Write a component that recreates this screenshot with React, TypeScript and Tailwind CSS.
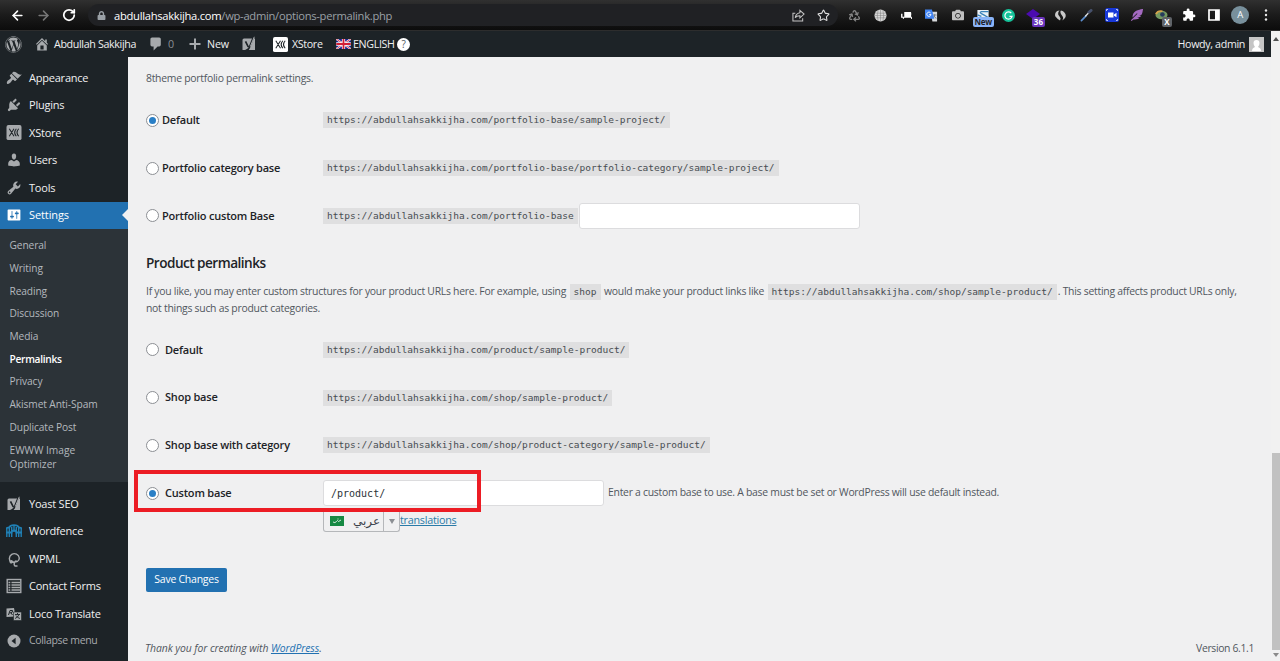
import type { ReactNode } from "react";
import { ArrowLeft, ArrowRight, Recycle, RotateCw, Star } from "lucide-react";
import { FaCamera, FaFeatherAlt, FaLock, FaWordpress } from "react-icons/fa";
import { MdExtension } from "react-icons/md";
import clsx from "clsx";

// 20x20 admin icon shapes
const paths = {
  home: "M16 8.5l1.53 1.53-1.06 1.06L10 4.6l-6.47 6.49-1.06-1.06L10 2.5l4 4v-2h2v4zm-6-2.46l6 5.99V18H4v-5.97zM12 17v-5H8v5h4z",
  comments: "M5 2h9q.82 0 1.41.59T16 4v7q0 .82-.59 1.41T14 13h-2l-5 5v-5H5q-.82 0-1.41-.59T3 11V4q0-.82.59-1.41T5 2z",
  appearance:
    "M14.48 11.06L7.41 3.99l1.5-1.5c.5-.56 2.3-.47 3.51.32 1.21.8 1.43 1.28 2.91 2.1 1.18.64 2.45 1.26 4.45.85zm-.71.71L6.7 4.7 4.93 6.47c-.39.39-.39 1.02 0 1.41l1.06 1.06c.39.39.39 1.03 0 1.42-.6.6-1.43 1.11-2.21 1.69-.35.26-.7.53-1.01.84C1.43 14.23.4 16.08 1.4 17.07c.99 1 2.84-.03 4.18-1.36.31-.31.58-.66.85-1.02.57-.78 1.08-1.61 1.69-2.21.39-.39 1.02-.39 1.41 0l1.06 1.06c.39.39 1.02.39 1.41 0z",
  plugins:
    "M13.11 4.36L9.87 7.6 8 5.73l3.24-3.24c.35-.34 1.05-.2 1.56.32.52.51.66 1.21.31 1.55zm-8 1.77l.91-1.12 9.01 9.01-1.19.84c-.71.71-2.63 1.16-3.82 1.16H6.14L4.9 17.26c-.59.59-1.54.59-2.12 0-.59-.58-.59-1.53 0-2.12l1.24-1.24v-3.88c0-1.13.4-3.19 1.09-3.89zm7.26 3.97l3.24-3.24c.34-.35 1.04-.21 1.55.31.52.51.66 1.21.31 1.55l-3.24 3.25z",
  users:
    "M10 9.25c-2.27 0-2.73-3.44-2.73-3.44C7 4.02 7.82 2 9.97 2c2.16 0 2.98 2.02 2.71 3.81 0 0-.41 3.44-2.68 3.44zm0 2.57L12.72 10c2.39 0 4.52 2.33 4.52 4.53v2.49s-3.65 1.13-7.24 1.13c-3.65 0-7.24-1.13-7.24-1.13v-2.49c0-2.25 1.94-4.48 4.47-4.48z",
  tools:
    "M16.68 9.77c-1.34 1.34-3.3 1.67-4.95.99l-5.41 6.52c-.99.99-2.59.99-3.58 0s-.99-2.59 0-3.57l6.52-5.42c-.68-1.65-.35-3.61.99-4.95 1.28-1.28 3.12-1.62 4.72-1.06l-2.89 2.89 2.82 2.82 2.86-2.87c.53 1.58.18 3.39-1.08 4.65zM3.81 16.21c.4.39 1.04.39 1.43 0 .4-.4.4-1.04 0-1.43-.39-.4-1.03-.4-1.43 0-.39.39-.39 1.03 0 1.43z",
  settings:
    "M18 16V4c0-.55-.45-1-1-1H3c-.55 0-1 .45-1 1v12c0 .55.45 1 1 1h14c.55 0 1-.45 1-1zM8 11h1c.55 0 1 .45 1 1s-.45 1-1 1H8v1.5c0 .28-.22.5-.5.5s-.5-.22-.5-.5V13H6c-.55 0-1-.45-1-1s.45-1 1-1h1V5.5c0-.28.22-.5.5-.5s.5.22.5.5V11zm5-2h-1c-.55 0-1-.45-1-1s.45-1 1-1h1V5.5c0-.28.22-.5.5-.5s.5.22.5.5V7h1c.55 0 1 .45 1 1s-.45 1-1 1h-1v5.5c0 .28-.22.5-.5.5s-.5-.22-.5-.5V9z",
};

function Dash({ name, className }: { name: keyof typeof paths; className?: string }) {
  return (
    <svg viewBox="0 0 20 20" className={clsx("size-4 shrink-0", className)} fill="currentColor">
      <path d={paths[name]} />
    </svg>
  );
}

function XStoreIcon({ className }: { className: string }) {
  return (
    <svg viewBox="0 0 16 16" className={clsx("size-[15px] shrink-0", className)}>
      <rect width="16" height="16" rx="2" fill="currentColor" />
      <path d="M3 4l5 8M8 4l-5 8M10.5 4Q7 8 10.5 12M13 4Q9.5 8 13 12" stroke="#1d2327" strokeWidth="1.1" fill="none" />
    </svg>
  );
}

function YoastIcon() {
  return (
    <svg viewBox="0 0 16 16" className="size-4 shrink-0">
      <path d="M3 2.5h11V14H1.500V4Q1.500 2.500 3 2.500z" fill="currentColor" />
      <path d="M4.500 5.300l2.800 5.700M12.500 1L8.300 11.500Q7.500 14 4.500 14.500" stroke="#1d2327" strokeWidth="1.7" fill="none" />
      <path d="M13.300 .8L9.300 10.500" stroke="currentColor" strokeWidth="1" fill="none" />
    </svg>
  );
}

function WordfenceIcon() {
  return (
    <svg viewBox="0 0 16 16" className="size-4 shrink-0 text-[#2080b5]" fill="none" stroke="currentColor">
      <path d="M.8 14V6M3.300 14V5M5.700 14V4M8 9V3M10.300 14V4M12.700 14V5M15.200 14V6" strokeWidth="1.4" />
      <path d="M0 6.200q1-2 3-1.500 1-2.500 5-2.500t5 2.500q2-.5 3 1.500M0 9.500h5.500q0-2 2.500-2t2.500 2H16" strokeWidth="1.8" />
    </svg>
  );
}

function WpmlIcon() {
  return (
    <svg viewBox="0 0 16 16" className="size-4 shrink-0" fill="none" stroke="currentColor" strokeWidth="1.4">
      <path d="M5.500 11.800A5 5 0 1 1 13.300 7c0 3.500-3.800 5-3.800 2.500M6 11.500c1.500-.8 3.500-.3 4.500-2M9.500 10.500c-1.500 1.500-2 3-.5 4.500h2.500" />
      <circle cx="5.3" cy="10.8" r="1.1" fill="currentColor" />
    </svg>
  );
}

function FormsIcon() {
  return (
    <svg viewBox="0 0 16 16" className="size-4 shrink-0" fill="none" stroke="currentColor">
      <rect x="1.2" y="1.5" width="13.6" height="13" strokeWidth="1.4" />
      <path d="M2.500 4.500h1.800M5.500 4.500H14M2.500 7h1.800M5.500 7H14M2.500 9.500h1.800M5.500 9.500H14M2.500 12h1.800M5.500 12H14" strokeWidth="1.3" />
    </svg>
  );
}

function LocoIcon() {
  return (
    <svg viewBox="0 0 16 16" className="size-4 shrink-0">
      <path d="M.5 2.500l7.500-.5 1.500 8.500L.5 11z" fill="currentColor" />
      <path d="M2.500 9L4 4.500h2.500q1 2-2.700 2.500M5 7l1.500 2" stroke="#1d2327" fill="none" />
      <path d="M7.500 6h8v8.500h-8z" fill="currentColor" stroke="#1d2327" strokeWidth=".6" />
      <path d="M9 8.500h5M11.500 7v1.500M13 8.500q-1 3-4 4M10 9.500q1.500 2.500 4 3" stroke="#1d2327" strokeWidth=".9" fill="none" />
    </svg>
  );
}

function CollapseIcon() {
  return (
    <svg viewBox="0 0 16 16" className="size-4 shrink-0">
      <circle cx="8" cy="8" r="6.5" fill="currentColor" />
      <path d="M9.600 4.800v6.400L5.500 8z" fill="#1d2327" />
    </svg>
  );
}

function Flag() {
  return (
    <svg viewBox="0 0 16 11" className="h-[10px] w-[15px] shrink-0">
      <path fill="#16218c" d="M0 0h16v11H0z" />
      <path d="M0 0l16 11M16 0L0 11" stroke="#fff" strokeWidth="2.2" />
      <path d="M0 0l16 11M16 0L0 11" stroke="#d21f35" strokeWidth=".9" />
      <path d="M8 0v11M0 5.500h16" stroke="#fff" strokeWidth="3.6" />
      <path d="M8 0v11M0 5.500h16" stroke="#d21f35" strokeWidth="2" />
    </svg>
  );
}

const extensions: ReactNode[] = [
  <Recycle className="size-[13px] text-[#858585]" strokeWidth={2.4} />,
  <svg viewBox="0 0 14 14" className="size-[13px]">
    <circle cx="7" cy="7" r="6.5" fill="#d6d6d6" />
    <path d="M1 4.500h12M.5 7h13M1 9.500h12M7 .5v13M4.500 1q-2 6 0 12M9.500 1q2 6 0 12" stroke="#777" strokeWidth=".5" fill="none" />
  </svg>,
  <svg viewBox="0 0 12 10" className="mt-px h-[9px] w-[11px]" fill="#fff">
    <path d="M3.500 1H11q.8 2.500 0 5.500H3.500zM0 3h1.500v3.500H12V9h-1V7.500H3V9H2V7.500H0z" />
  </svg>,
  <svg viewBox="0 0 14 14" className="size-[13px]">
    <path d="M6 3h7v10.500H8z" fill="#d7d9dc" />
    <path d="M8.500 6.500h4M10.500 5.500q0 3-2 4.500M9.500 7.500q1 2 3 2.500" stroke="#647079" strokeWidth=".8" fill="none" />
    <path d="M0 .5h7.500L10 10.500H0z" fill="#4285f4" />
    <path d="M6 4.200A2.300 2.300 0 1 0 6.500 6H4.500" stroke="#fff" fill="none" />
  </svg>,
  <FaCamera className="size-3 text-[#c0c0c0]" />,
  <div className="relative flex h-full w-full justify-center pt-2.5">
    <svg viewBox="0 0 14 10" className="h-2 w-3.5">
      <path fill="#e9f1f7" d="M0 0h14v10H0z" />
      <path d="M14 2H5Q2 3 5 4.500T13 9M0 6l5 2" stroke="#3c83ba" strokeWidth="1.6" fill="none" />
    </svg>
    <span className="absolute top-[17px] h-[10px] rounded-[2px] bg-[#8ab4f8] px-0.5 text-[8px] leading-[10px] font-bold tracking-[-0.2px] text-[#202124]">New</span>
  </div>,
  <svg viewBox="0 0 14 14" className="size-[13px]">
    <circle cx="7" cy="7" r="7" fill="#15c39a" />
    <path d="M10 4.500A3.900 3.900 0 1 0 10.800 8H8" stroke="#fff" strokeWidth="1.3" fill="none" />
  </svg>,
  <div className="relative flex h-full w-full justify-center">
    <svg viewBox="0 0 14 12" className="mt-2 mr-1 h-3 w-3.5">
      <path d="M0 6l7-5 7 5-7 5z" fill="#4b0bb0" />
    </svg>
    <span className="absolute top-[17px] left-[10px] h-[10px] rounded-[2px] bg-[#6a35bd] px-0.5 text-[8px] leading-[10px] font-bold text-white">36</span>
  </div>,
  <svg viewBox="0 0 14 14" className="size-[13px]" fill="#c9c9c9">
    <path d="M6 1.500C2 1.500.5 5 1.500 8q2 2.500 5 4.500 1.500-2.500-.5-4.500T4.500 4.500Q4.500 2.500 6 1.500zM7.500 1.500q4 1 5 4.500 1 4-4 6.500 2.500-2.500.5-5T7 4Q6.500 2.500 7.500 1.500z" />
  </svg>,
  <svg viewBox="0 0 14 14" className="size-[13px]" strokeLinecap="round">
    <path d="M1.500 12.500l5-5" stroke="#5c8fd0" strokeWidth="1.8" />
    <path d="M6 7.500L11.500 2" stroke="#ddd" strokeWidth="1.5" />
    <path d="M9.500 3.500L12 1.500" stroke="#46516c" strokeWidth="3" />
  </svg>,
  <svg viewBox="0 0 14 14" className="size-3.5">
    <rect width="14" height="14" rx="2.5" fill="#1838d8" />
    <path d="M1.500 3V1.500H3M11 1.500h1.500V3M12.500 11v1.500H11M3 12.500H1.500V11" stroke="#fff" strokeWidth=".7" fill="none" />
    <path d="M3 4.500h5.500V9.500H3zM9 6.500l2.500-1.800v4.600L9 7.800z" fill="#fff" />
  </svg>,
  <FaFeatherAlt className="size-3 text-[#a46ac1]" />,
  <div className="relative flex h-full w-full justify-center">
    <svg viewBox="0 0 14 10" className="mt-[10px] mr-1 h-[10px] w-[13px]">
      <ellipse cx="7" cy="5" rx="6.5" ry="4.5" fill="#749a62" />
      <path d="M1 4q2-4 7-3" stroke="#d6a34a" strokeWidth="2" fill="none" />
      <circle cx="8" cy="4.5" r="2.5" fill="#263b5c" />
    </svg>
    <span className="absolute top-[17px] left-[12px] h-[10px] rounded-[2px] bg-[#5f6368] px-0.5 text-[8px] leading-[10px] font-bold text-white">X</span>
  </div>,
  <MdExtension className="size-3.5 text-white" />,
  <svg viewBox="0 0 12 12" className="size-3">
    <path d="M1 1h10v10H1z" stroke="#fff" strokeWidth="1.7" fill="none" />
    <path d="M7 1h4v10H7z" fill="#fff" />
  </svg>,
  <span className="flex size-[18px] items-center justify-center rounded-full bg-[#78909c] text-[9.5px] text-white">A</span>,
  <svg viewBox="0 0 4 14" className="h-3.5 w-1" fill="#e8e8e8">
    <circle cx="2" cy="2.5" r="1.2" />
    <circle cx="2" cy="7" r="1.2" />
    <circle cx="2" cy="11.5" r="1.2" />
  </svg>,
];

function BrowserBar() {
  return (
    <div className="flex h-[31px] shrink-0 items-center border-b border-[#2d2d2d] bg-linear-to-b from-[#303030] via-[#1b1b1b] via-50% to-[#0c0c0c]">
      <div className="flex w-[88px] shrink-0 items-center gap-[11px] pl-[10px]">
        <ArrowLeft className="size-[15px] text-white" strokeWidth={2.5} />
        <ArrowRight className="size-[15px] text-[#777]" strokeWidth={2.5} />
        <RotateCw className="size-[14px] text-white" strokeWidth={3} />
      </div>
      <div className="flex h-[22px] w-[750px] shrink-0 items-center rounded-full bg-[#202124] pr-2 pl-[9px]">
        <FaLock className="size-[9px] text-[#9aa0a6]" />
        <p className="ml-2 pt-0.5 text-[11.2px] tracking-[-0.28px] whitespace-nowrap text-[#9aa0a6]">
          <span className="text-white">abdullahsakkijha.com</span>/wp-admin/options-permalink.php
        </p>
        <svg viewBox="0 0 14 14" className="ml-auto size-[13px] text-[#c4c4c4]" fill="none" stroke="currentColor" strokeWidth="1.1">
          <path d="M3.500 4.500H1v8.500h10.500v-3M8.500 1.500l4.500 4-4.500 4v-2.300Q5 7 3.500 9.500q.3-4.500 5-5.500z" />
        </svg>
        <Star className="ml-3 size-[13px] text-[#e0e0e0]" />
      </div>
      <div className="ml-[4px] flex h-full w-[437px] shrink-0">
        {extensions.map((icon, i) => (
          <div key={i} className="flex h-full w-[25.7px] shrink-0 items-center justify-center">
            {icon}
          </div>
        ))}
      </div>
    </div>
  );
}

function AdminBar() {
  return (
    <div className="flex h-[26px] items-center bg-[#1d2327] pl-[5px] text-[10.7px] tracking-[-0.35px] whitespace-nowrap text-[#f0f0f1]">
      <FaWordpress className="size-[17px] text-[#a7aaad]" />
      <Dash name="home" className="ml-3 text-[#a7aaad]" />
      <span className="ml-1 w-[94px]">Abdullah Sakkijha</span>
      <Dash name="comments" className="text-[#a7aaad]" />
      <span className="ml-1 w-[21px] text-[#8c8f94]">0</span>
      <svg viewBox="0 0 12 12" className="size-3 text-[#a7aaad]" stroke="currentColor" strokeWidth="2">
        <path d="M6 .5v11M.5 6h11" />
      </svg>
      <span className="ml-1.5 w-[34px] tracking-[-0.1px]">New</span>
      <span className="w-[32px] text-[#a7aaad]">
        <YoastIcon />
      </span>
      <XStoreIcon className="text-white" />
      <span className="ml-1 w-[44px]">XStore</span>
      <Flag />
      <span className="ml-0.5 w-[44px]">ENGLISH</span>
      <span className="flex size-[13px] items-center justify-center rounded-full bg-white text-[10px] text-[#50575e]">?</span>
      <span className="mr-1 ml-auto">Howdy, admin</span>
      <svg viewBox="0 0 15 15" className="mr-[7px] size-[15px]">
        <path fill="#c5c5c5" d="M0 0h15v15H0z" />
        <path fill="#fff" d="M3 14q0-3 3-4-1.500-1.500-1.500-4 0-3 3-3t3 3q0 2.500-1.500 4 3 1 3 4z" />
      </svg>
    </div>
  );
}

function MenuItem({ icon, label, muted }: { icon: ReactNode; label: string; muted?: boolean }) {
  return (
    <li
      className={clsx(
        "flex h-[27.5px] items-center gap-[7px] pl-1.5",
        muted ? "text-[10.5px] tracking-[-0.32px] text-[#a7aaad]" : "text-[#f0f0f1]"
      )}
    >
      <span className="text-[#a7aaad]">{icon}</span>
      {label}
    </li>
  );
}

const submenu = ["General", "Writing", "Reading", "Discussion", "Media", "Permalinks", "Privacy", "Akismet Anti-Spam", "Duplicate Post"];

function Sidebar() {
  return (
    <nav className="w-32 shrink-0 bg-[#1d2327] pt-[7px] text-[11px] tracking-[-0.22px] whitespace-nowrap">
      <ul>
        <MenuItem icon={<Dash name="appearance" />} label="Appearance" />
        <MenuItem icon={<Dash name="plugins" />} label="Plugins" />
        <MenuItem icon={<XStoreIcon className="w-4" />} label="XStore" />
        <MenuItem icon={<Dash name="users" />} label="Users" />
        <MenuItem icon={<Dash name="tools" />} label="Tools" />
        <li className="relative flex h-[27.5px] items-center gap-[7px] bg-[#2271b1] pl-1.5 tracking-[-0.1px] text-white">
          <Dash name="settings" />
          Settings
          <span className="absolute top-[7.5px] right-0 border-y-[6.5px] border-r-[6.5px] border-y-transparent border-r-[#f0f0f1]" />
        </li>
      </ul>
      <ul className="h-[252.5px] bg-[#2c3338] pt-[5.5px] pl-[9.5px] text-[10.2px] tracking-[-0.1px] text-[#b4b9be]">
        {submenu.map((s) => (
          <li key={s} className={clsx("flex h-[22.7px] items-center", s === "Permalinks" && "font-semibold tracking-[-0.3px] text-white")}>
            {s}
          </li>
        ))}
        <li className="pt-1 leading-[14.5px] tracking-normal">
          EWWW Image
          <br />
          Optimizer
        </li>
      </ul>
      <ul className="pt-[8.6px]">
        <MenuItem icon={<YoastIcon />} label="Yoast SEO" />
        <MenuItem icon={<WordfenceIcon />} label="Wordfence" />
        <MenuItem icon={<WpmlIcon />} label="WPML" />
        <MenuItem icon={<FormsIcon />} label="Contact Forms" />
        <MenuItem icon={<LocoIcon />} label="Loco Translate" />
        <MenuItem icon={<CollapseIcon />} label="Collapse menu" muted />
      </ul>
    </nav>
  );
}

function Code({ children }: { children: ReactNode }) {
  return (
    <code className="inline-block h-4 bg-[#dfdfe0] px-[4px] font-['DejaVu_Sans_Mono',monospace] text-[9.54px] leading-4 tracking-normal whitespace-nowrap text-[#484d52]">
      {children}
    </code>
  );
}

function Option({ label, checked, wide, children }: { label: string; checked?: boolean; wide?: boolean; children: ReactNode }) {
  return (
    <div className="flex h-[47.8px] items-center">
      <div className="flex w-[177px] shrink-0 items-center">
        <span className="flex size-[13px] items-center justify-center rounded-full border border-[#8c8f94] bg-white">
          {checked && <span className="size-[7px] rounded-full bg-[#2a7fc6]" />}
        </span>
        <span className={clsx("text-[11px] font-semibold tracking-[-0.2px] text-[#1d2327]", wide ? "ml-1.5" : "ml-[3px]")}>{label}</span>
      </div>
      {children}
    </div>
  );
}

const host = "https://abdullahsakkijha.com";

function Content() {
  return (
    <main className="flex min-w-0 flex-1 flex-col pl-[18px] text-[10.4px] tracking-[-0.26px] text-[#50575e]">
      <p className="h-[39.4px] pt-[13px] leading-4">8theme portfolio permalink settings.</p>
      <div>
        <Option label="Default" checked>
          <Code>{host}/portfolio-base/sample-project/</Code>
        </Option>
        <Option label="Portfolio category base">
          <Code>{host}/portfolio-base/portfolio-category/sample-project/</Code>
        </Option>
        <Option label="Portfolio custom Base">
          <Code>{host}/portfolio-base</Code>
          <div className="ml-px h-[26px] w-[281px] rounded-[3px] border border-[#dcdcde] bg-white" />
        </Option>
      </div>
      <h2 className="mt-[13.2px] text-[13.6px] leading-5 font-semibold tracking-[-0.52px] text-[#1d2327]">Product permalinks</h2>
      <p className="mt-[10px] leading-4 tracking-[-0.255px] whitespace-nowrap">
        If you like, you may enter custom structures for your product URLs here. For example, using{" "}
        <span className="mx-px"><Code>shop</Code></span> would make your product links like{" "}
        <span className="mx-px"><Code>{host}/shop/sample-product/</Code></span>. This setting affects product URLs only,
        <br />
        not things such as product categories.
      </p>
      <div className="relative mt-[10px]">
        <Option label="Default" wide>
          <Code>{host}/product/sample-product/</Code>
        </Option>
        <Option label="Shop base" wide>
          <Code>{host}/shop/sample-product/</Code>
        </Option>
        <Option label="Shop base with category" wide>
          <Code>{host}/shop/product-category/sample-product/</Code>
        </Option>
        <Option label="Custom base" checked wide>
          <div className="flex h-[26px] w-[281px] shrink-0 items-center rounded-[3px] border border-[#dcdcde] bg-white pl-[7px] font-['DejaVu_Sans_Mono',monospace] text-[10px] tracking-normal text-[#2c3338]">
            /product/
          </div>
          <span className="ml-1 whitespace-nowrap">Enter a custom base to use. A base must be set or WordPress will use default instead.</span>
        </Option>
        <div className="absolute bottom-[5px] -left-3 h-[42px] w-[347px] border-4 border-[#ec1c24]" />
      </div>
      <div className="-mt-[5.5px] flex h-5 pl-[177px]">
        <div className="flex h-5 w-[77px] items-center rounded-b-[3px] border border-t-0 border-[#b5b7ba] bg-[#f0f0f1]">
          <svg viewBox="0 0 14 10" className="ml-1.5 h-[10px] w-3.5">
            <path fill="#168943" d="M0 0h14v10H0z" />
            <path d="M3 6q2 1.500 3.500-.5l1-1 1 1L11 4M7.500 3h1" stroke="#fff" strokeWidth=".8" fill="none" />
          </svg>
          <span className="ml-[9px] w-[30px] font-['DejaVu_Sans',sans-serif] text-[12px] text-[#3c434a]">عربي</span>
          <span className="flex h-full flex-1 items-center justify-center border-l border-[#b5b7ba]">
            <span className="border-x-[3px] border-t-[5px] border-x-transparent border-t-[#8c8f94]" />
          </span>
        </div>
        <a className="text-[10.8px] leading-4 text-[#2a7ba8] underline">translations</a>
      </div>
      <button className="mt-9 h-6 w-[81px] rounded-[2px] bg-[#2271b1] text-[10.5px] whitespace-nowrap text-white">Save Changes</button>
      <footer className="mt-[48.7px] -ml-px flex justify-between pr-[17px] leading-4">
        <p className="tracking-[-0.08px] italic">
          Thank you for creating with <a className="text-[#2271b1] underline">WordPress</a>.
        </p>
        <span className="tracking-[-0.35px]">Version 6.1.1</span>
      </footer>
    </main>
  );
}

export default function App() {
  return (
    <div className="flex h-[661px] w-[1280px] flex-col overflow-hidden bg-[#f0f0f1] font-['Open_Sans','Noto_Sans',sans-serif]">
      <BrowserBar />
      <div className="flex min-h-0 flex-1">
        <div className="flex w-[1271px] shrink-0 flex-col">
          <AdminBar />
          <div className="flex min-h-0 flex-1">
            <Sidebar />
            <Content />
          </div>
        </div>
        <div className="flex flex-1 flex-col items-center justify-between bg-[#f1f1f1] pt-1.5 pb-1">
          <span className="border-x-[3px] border-b-[4px] border-x-transparent border-b-[#505050]" />
          <div className="mt-auto mb-[3px] ml-px h-[197px] w-2 bg-[#c1c1c1]" />
          <span className="border-x-[3px] border-t-[4px] border-x-transparent border-t-[#8a8a8a]" />
        </div>
      </div>
    </div>
  );
}
